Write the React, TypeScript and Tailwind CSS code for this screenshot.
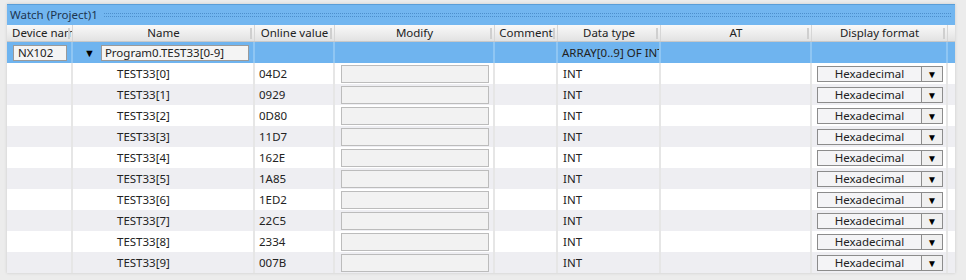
const cols = "grid grid-cols-[66px_182px_80px_160px_63px_103px_151px_136px_7px]"

const values = ["04D2", "0929", "0D80", "11D7", "162E", "1A85", "1ED2", "22C5", "2334", "007B"]

function HeaderCell({ label, align = "center" }: { label: string; align?: string }) {
  return (
    <div className="relative flex items-center overflow-hidden whitespace-nowrap border-r border-[#d6d6d6]">
      <span className={align === "left" ? "pl-[5px]" : "w-full text-center"}>{label}</span>
      <span className="absolute right-[2px] top-[3px] h-[11px] w-[2px] bg-[#cfcfcf]" />
    </div>
  )
}

function Combo() {
  return (
    <div className="flex h-[16px] w-[126px] border border-[#8c8c8c] bg-[#f4f4f6]">
      <div className="flex-1 border-r border-[#8c8c8c] text-center leading-[14px]">Hexadecimal</div>
      <div className="flex w-[20px] items-center justify-center bg-[#f0f0f0]">
        <span className="text-[10px] leading-none text-black">▼</span>
      </div>
    </div>
  )
}

export default function App() {
  return (
    <div
      className="h-[280px] w-[966px] overflow-hidden bg-[#ececec] pl-[7px] pt-[4px] text-[11.5px] text-[#222]"
      style={{ fontFamily: "'Noto Sans', 'Liberation Sans', sans-serif" }}
    >
      <div className="w-[948px] bg-white shadow-[0_0_3px_rgba(0,0,0,0.15)]">
        {/* title bar */}
        <div className="flex h-[21px] items-center gap-[6px] border-t border-[#5a9ed8] bg-[#72b6f0] pl-[3px] pr-[4px]">
          <span className="whitespace-nowrap text-[#1d3550]">Watch (Project)1</span>
          <div className="h-[4px] flex-1 border-y border-dotted border-[#4d8fcc]" />
        </div>

        {/* header */}
        <div className={`${cols} h-[17px] border-b border-[#c8c8c8] bg-gradient-to-b from-[#f9f9f9] to-[#e2e2e2] leading-[16px]`}>
          <HeaderCell label="Device name" align="left" />
          <HeaderCell label="Name" />
          <HeaderCell label="Online value" />
          <HeaderCell label="Modify" />
          <HeaderCell label="Comment" />
          <HeaderCell label="Data type" />
          <HeaderCell label="AT" />
          <HeaderCell label="Display format" />
          <div />
        </div>

        {/* parent row */}
        <div className={`${cols} h-[21px] bg-[#6fb4ef]`}>
          <div className="flex items-center border-r-2 border-[#8fc6f3] pl-[6px]">
            <div className="h-[16px] w-[54px] border border-[#9a9a9a] bg-[#f4f4f4] pl-[4px] leading-[14px]">NX102</div>
          </div>
          <div className="flex items-center gap-[6px] border-r-2 border-[#8fc6f3] pl-[11px]">
            <span className="text-[11px] leading-none text-black">▼</span>
            <div className="h-[16px] w-[148px] border border-[#9a9a9a] bg-[#f4f4f4] pl-[3px] leading-[14px]">Program0.TEST33[0-9]</div>
          </div>
          <div className="border-r-2 border-[#8fc6f3]" />
          <div className="border-r-2 border-[#8fc6f3]" />
          <div className="border-r-2 border-[#8fc6f3]" />
          <div className="flex items-center overflow-hidden whitespace-nowrap border-r-2 border-[#8fc6f3] pl-[4px]">ARRAY[0..9] OF INT</div>
          <div className="border-r-2 border-[#8fc6f3]" />
          <div className="border-r-2 border-[#8fc6f3]" />
          <div />
        </div>

        {/* element rows */}
        {values.map((v, i) => (
          <div key={i} className={`${cols} h-[21px] ${i % 2 === 1 ? "bg-[#eeeef2]" : "bg-white"}`}>
            <div className="border-r-2 border-[#e6e6e6]" />
            <div className="flex items-center border-r-2 border-[#e6e6e6] pl-[44px]">TEST33[{i}]</div>
            <div className="flex items-center border-r-2 border-[#e6e6e6] pl-[4px]">{v}</div>
            <div className="flex items-center border-r-2 border-[#e6e6e6] pl-[6px]">
              <div className="h-[18px] w-[148px] border border-[#bcbcbc] bg-[#f2f2f2]" />
            </div>
            <div className="border-r-2 border-[#e6e6e6]" />
            <div className="flex items-center border-r-2 border-[#e6e6e6] pl-[5px]">INT</div>
            <div className="border-r-2 border-[#e6e6e6]" />
            <div className="flex items-center border-r-2 border-[#e6e6e6] pl-[5px]">
              <Combo />
            </div>
            <div />
          </div>
        ))}
      </div>
    </div>
  )
}
